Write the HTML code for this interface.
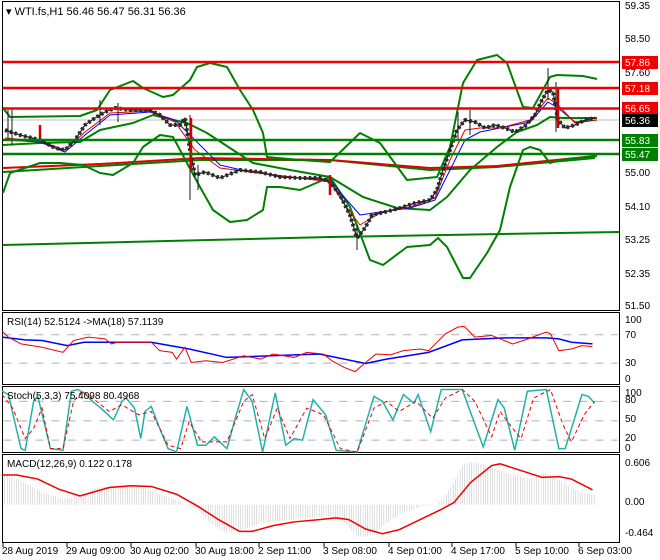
<!DOCTYPE html>
<html><head><meta charset="utf-8"><style>
body{margin:0;background:#fff;}
svg{display:block;font-family:"Liberation Sans",sans-serif;}
</style></head><body>
<svg width="660" height="560" viewBox="0 0 660 560" xmlns="http://www.w3.org/2000/svg">
<defs>
<pattern id="hb" width="5.5" height="10" patternUnits="userSpaceOnUse"><rect x="0" y="0" width="1" height="10" fill="#b4b4b4"/></pattern>
</defs>
<rect width="660" height="560" fill="#fff"/>
<g fill="none" stroke="#000" stroke-width="1">
<rect x="2.5" y="1.5" width="617" height="309"/>
<rect x="2.5" y="312.5" width="617" height="72"/>
<rect x="2.5" y="386.5" width="617" height="66"/>
<rect x="2.5" y="454.5" width="617" height="88"/>
</g>
<g fill="none" stroke-linejoin="round">
<line x1="3" y1="120" x2="619" y2="120" stroke="#c0c0c0"/>
<line x1="3" y1="245" x2="330" y2="237" stroke="#008000" stroke-width="2"/>
<line x1="330" y1="237" x2="619" y2="232" stroke="#008000" stroke-width="2"/>
<polyline stroke="#008000" stroke-width="2" points="3,172 100,166 200,160 330,160 430,170 497,167 595,158"/>
<polyline stroke="#e00000" stroke-width="2" points="3,168 100,164 200,158 330,160 430,168 497,166 595,156"/>
<polyline stroke="#008000" stroke-width="2" points="3,108 10,117 80,116 97,110 110,90 133,81 143,88 163,97 173,95 190,80 197,67 210,63 227,67 240,90 253,110 263,133 267,157 300,160 330,162 360,133 380,143 407,180 437,177 450,147 463,83 477,60 497,55 507,63 523,107 533,108 550,77 557,75 583,76 597,79"/>
<polyline stroke="#008000" stroke-width="2" points="3,193 10,173 40,163 60,163 83,165 100,173 113,175 133,163 143,147 160,135 173,137 187,163 200,187 213,210 230,222 247,220 263,210 267,187 280,187 300,190 330,177 350,207 370,260 383,265 407,247 430,245 438,238 447,247 463,278 470,278 487,253 500,230 510,187 523,150 530,147 540,150 550,163 560,160 597,156"/>
<polyline stroke="#008000" stroke-width="2" points="3,145 40,143 80,142 100,130 133,123 153,115 173,120 187,123 207,133 233,150 253,163 290,170 330,177 363,197 397,208 430,210 447,197 470,170 497,147 517,132 537,125 550,117 563,118 597,118"/>
<polyline stroke="#0000ff" stroke-width="1" points="5,140 40,142 65,152 85,135 110,115 150,112 175,120 195,140 220,165 250,172 300,178 330,180 345,198 360,215 380,212 410,208 435,200 450,170 465,140 480,132 500,128 530,122 548,102 558,108 575,122 597,120"/>
<polyline stroke="#e00000" stroke-width="1" points="5,138 40,141 65,150 85,132 110,113 150,111 175,122 195,150 220,168 250,172 300,178 330,182 345,205 360,225 380,213 410,207 435,198 450,160 465,130 480,128 500,128 530,120 548,98 558,105 575,123 597,120"/>
<polyline stroke="#1a1a1a" stroke-width="1.2" points="5,130 20,135 40,140 55,148 65,150 75,140 85,125 95,118 105,112 115,108 130,110 150,110 160,115 170,125 180,125 185,118 190,150 195,175 205,172 220,178 240,170 260,172 280,177 300,178 320,178 330,182 340,195 350,215 357,238 365,228 372,215 385,212 400,208 415,203 430,200 437,190 443,170 450,150 457,130 465,120 475,122 485,128 495,125 505,128 515,132 525,126 535,115 542,100 548,90 553,92 558,120 565,128 575,125 585,120 595,118"/>
<polyline stroke="#2a2a2a" stroke-width="4" stroke-dasharray="2.5 2.5" points="5,130 20,135 40,140 55,148 65,150 75,140 85,125 95,118 105,112 115,108 130,110 150,110 160,115 170,125 180,125 185,118 190,150 195,175 205,172 220,178 240,170 260,172 280,177 300,178 320,178 330,182 340,195 350,215 357,238 365,228 372,215 385,212 400,208 415,203 430,200 437,190 443,170 450,150 457,130 465,120 475,122 485,128 495,125 505,128 515,132 525,126 535,115 542,100 548,90 553,92 558,120 565,128 575,125 585,120 595,118"/>
<path stroke="#1a1a1a" stroke-width="1" d="M8,110V140 M12,108V145 M190,115V200 M198,165V190 M357,225V250 M100,100V125 M118,103V122 M458,112V140 M548,68V100 M556,82V132 M470,110V135"/>
<path stroke="#d00000" stroke-width="2.5" d="M191,118V170 M558,88V128 M40,125V138 M330,175V195"/>
<g stroke-width="2.5">
<line x1="3" y1="62" x2="619" y2="62" stroke="#f00000"/>
<line x1="3" y1="88" x2="619" y2="88" stroke="#f00000"/>
<line x1="3" y1="108.5" x2="619" y2="108.5" stroke="#f00000"/>
<line x1="3" y1="140" x2="619" y2="140" stroke="#008000"/>
<line x1="3" y1="154" x2="619" y2="154" stroke="#008000"/>
</g>
</g>
<text x="6" y="15" font-size="11">▾ WTI.fs,H1  56.46 56.47 56.31 56.36</text>
<g font-size="10" fill="#000">
<text x="625" y="9">59.35</text>
<text x="625" y="42">58.50</text>
<text x="625" y="76">57.60</text>
<text x="625" y="176">55.00</text>
<text x="625" y="210">54.10</text>
<text x="625" y="243">53.25</text>
<text x="625" y="277">52.35</text>
<text x="625" y="309">51.50</text>
</g>
<g font-size="10" fill="#fff">
<rect x="622" y="56" width="36" height="13" fill="#f00000"/><text x="625" y="66">57.86</text>
<rect x="622" y="82" width="36" height="13" fill="#f00000"/><text x="625" y="92">57.18</text>
<rect x="622" y="102" width="36" height="13" fill="#f00000"/><text x="625" y="112">56.65</text>
<rect x="622" y="114" width="36" height="13" fill="#000"/><text x="625" y="124">56.36</text>
<rect x="622" y="134" width="36" height="13" fill="#008000"/><text x="625" y="144">55.83</text>
<rect x="622" y="148" width="36" height="13" fill="#008000"/><text x="625" y="158">55.47</text>
</g>
<g transform="translate(0,300) scale(0.4202,0.3378)" fill="none">
<g stroke="#b0b0b0" stroke-dasharray="8 8">
<line x1="8" y1="103" x2="1470" y2="103" vector-effect="non-scaling-stroke"/>
<line x1="8" y1="187" x2="1470" y2="187" vector-effect="non-scaling-stroke"/>
<line x1="8" y1="300" x2="1470" y2="300" vector-effect="non-scaling-stroke"/>
<line x1="8" y1="358" x2="1470" y2="358" vector-effect="non-scaling-stroke"/>
<line x1="8" y1="415" x2="1470" y2="415" vector-effect="non-scaling-stroke"/>
</g>
<polyline stroke="#0000ff" stroke-width="1.5" vector-effect="non-scaling-stroke" points="5,110 60,118 100,120 160,135 200,125 360,125 450,145 540,170 760,160 870,188 920,175 1020,155 1100,118 1200,112 1300,112 1330,115 1360,125 1410,130"/>
<polyline stroke="#f00000" stroke-width="1" vector-effect="non-scaling-stroke" points="5,92 20,110 50,130 100,140 150,155 175,120 210,110 250,115 265,130 280,125 360,125 380,150 410,155 420,175 440,140 455,185 490,180 530,185 580,165 620,175 650,160 700,170 730,155 770,160 790,180 820,200 845,212 870,185 895,160 930,162 960,150 1000,145 1020,150 1060,100 1090,80 1105,78 1130,110 1170,105 1220,130 1250,118 1300,95 1310,100 1330,150 1360,145 1385,135 1410,138"/>
<polyline stroke="#20b2aa" stroke-width="1.5" vector-effect="non-scaling-stroke" points="5,270 20,280 50,440 60,445 80,300 90,285 120,440 150,445 170,270 185,265 200,275 220,300 240,320 270,355 290,300 300,290 320,320 335,410 345,330 360,315 380,380 400,440 420,450 445,315 470,430 490,430 510,405 540,440 560,350 580,265 600,300 625,450 655,275 680,430 700,410 720,415 745,295 775,340 800,445 850,450 890,285 910,300 935,355 960,280 985,305 995,280 1025,390 1050,265 1100,265 1150,435 1185,295 1200,320 1225,445 1255,270 1300,265 1330,440 1345,440 1385,280 1400,285 1415,305"/>
<polyline stroke="#f00000" stroke-width="1" stroke-dasharray="4 3" vector-effect="non-scaling-stroke" points="5,280 30,320 60,410 80,380 100,320 120,440 150,440 175,300 195,270 230,300 260,330 290,310 330,340 360,330 400,430 430,440 450,360 480,420 510,420 540,420 580,300 600,280 630,410 660,320 690,410 730,320 770,340 810,440 850,450 890,320 920,300 950,330 990,300 1030,350 1060,290 1100,265 1130,300 1170,405 1190,330 1220,380 1240,410 1270,290 1310,265 1340,370 1360,420 1390,340 1415,300"/>
<polygon fill="url(#hb)" stroke="none" points="8,606 10,515 50,535 100,570 150,590 190,580 230,555 280,550 330,550 380,575 420,590 440,606 470,620 500,660 540,690 580,680 620,660 700,650 780,640 820,660 850,700 880,700 920,660 960,630 1000,612 1040,606 1060,580 1080,540 1100,490 1120,480 1150,485 1200,510 1260,530 1300,510 1340,540 1380,570 1418,578 1418,606"/>
<polyline stroke="#f00000" stroke-width="1.5" vector-effect="non-scaling-stroke" points="5,518 40,518 90,530 140,560 190,580 260,555 310,550 360,552 420,575 470,610 520,650 570,685 600,685 650,668 700,657 760,650 800,645 830,650 870,678 910,692 950,680 1000,650 1050,620 1080,600 1120,540 1170,490 1190,485 1240,505 1290,525 1330,523 1360,530 1410,562"/>
</g>
<g font-size="10" fill="#000">
<text x="7" y="325">RSI(14) 52.5124  -&gt;MA(18) 57.1139</text>
<text x="7" y="399">Stoch(5,3,3) 75.4098 80.4968</text>
<text x="7" y="467">MACD(12,26,9) 0.122 0.178</text>
<text x="625" y="323">100</text><text x="625" y="338">70</text><text x="625" y="366">30</text><text x="625" y="382">0</text>
<text x="625" y="396">100</text><text x="625" y="403">80</text><text x="625" y="422">50</text><text x="625" y="441">20</text><text x="625" y="451">0</text>
<text x="625" y="466">0.606</text><text x="625" y="505">0.00</text><text x="625" y="536">-0.464</text>
<text x="2" y="554">28 Aug 2019</text>
<text x="66" y="554">29 Aug 09:00</text>
<text x="130" y="554">30 Aug 02:00</text>
<text x="195" y="554">30 Aug 18:00</text>
<text x="258" y="554">2 Sep 11:00</text>
<text x="323" y="554">3 Sep 08:00</text>
<text x="388" y="554">4 Sep 01:00</text>
<text x="451" y="554">4 Sep 17:00</text>
<text x="515" y="554">5 Sep 10:00</text>
<text x="578" y="554">6 Sep 03:00</text>
</g>
<g stroke="#000">
<line x1="3" y1="543" x2="3" y2="547"/><line x1="67" y1="543" x2="67" y2="547"/><line x1="131" y1="543" x2="131" y2="547"/><line x1="196" y1="543" x2="196" y2="547"/><line x1="259" y1="543" x2="259" y2="547"/><line x1="324" y1="543" x2="324" y2="547"/><line x1="389" y1="543" x2="389" y2="547"/><line x1="452" y1="543" x2="452" y2="547"/><line x1="516" y1="543" x2="516" y2="547"/><line x1="579" y1="543" x2="579" y2="547"/>
</g>
</svg>
</body></html>
